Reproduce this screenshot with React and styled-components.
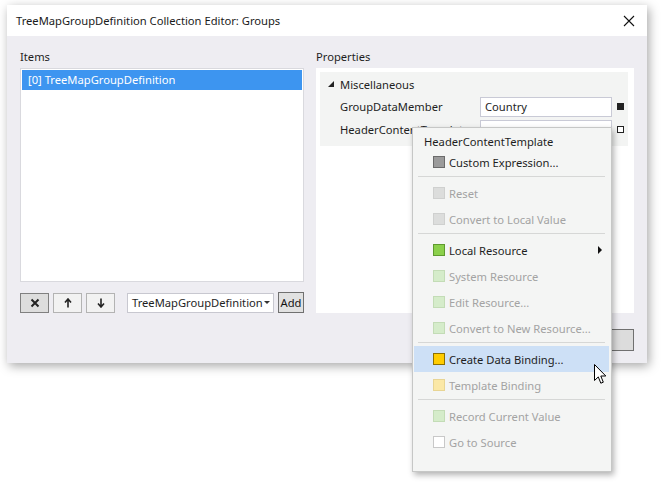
import React from "react";
import styled, { createGlobalStyle } from "styled-components";

const GlobalStyle = createGlobalStyle`
  html, body {
    margin: 0;
    padding: 0;
    background: #ffffff;
  }
  body {
    font-family: "Noto Sans", "Open Sans", sans-serif;
    font-size: 11.2px;
    color: #1e1e1e;
  }
`;

const menuItems = [
  { type: "header", label: "HeaderContentTemplate" },
  { label: "Custom Expression...", fill: "#9b9b9b", edge: "#6b6b6b" },
  { type: "sep" },
  { label: "Reset", fill: "#dcdddc", edge: "#cfd0cf", disabled: true },
  { label: "Convert to Local Value", fill: "#dcdddc", edge: "#cfd0cf", disabled: true },
  { type: "sep" },
  { label: "Local Resource", fill: "#8bd04b", edge: "#5f9a2f", submenu: true },
  { label: "System Resource", fill: "#d5ecca", edge: "#c3dcb6", disabled: true },
  { label: "Edit Resource...", fill: "#d5ecca", edge: "#c3dcb6", disabled: true },
  { label: "Convert to New Resource...", fill: "#d5ecca", edge: "#c3dcb6", disabled: true },
  { type: "sep" },
  { label: "Create Data Binding...", fill: "#ffcc00", edge: "#8d7000", active: true },
  { label: "Template Binding", fill: "#fbe8a6", edge: "#e8d594", disabled: true },
  { type: "sep" },
  { label: "Record Current Value", fill: "#d5ecca", edge: "#c3dcb6", disabled: true },
  { label: "Go to Source", fill: "#ffffff", edge: "#c8c8c8", disabled: true },
];

const App = () => {
  return (
    <Stage>
      <GlobalStyle />
      <Dialog>
        <TitleBar>
          <Title>TreeMapGroupDefinition Collection Editor: Groups</Title>
          <CloseButton>
            <svg width="12" height="12" viewBox="0 0 12 12">
              <path d="M1 1 L11 11 M11 1 L1 11" stroke="#111" strokeWidth="1.1" />
            </svg>
          </CloseButton>
        </TitleBar>
        <Body>
          <Columns>
            <ItemsColumn>
              <Label>Items</Label>
              <ItemsList>
                <ItemRow $selected>[0] TreeMapGroupDefinition</ItemRow>
              </ItemsList>
              <Toolbar>
                <ToolButton $pressed>
                  <svg width="10" height="10" viewBox="0 0 10 10">
                    <path d="M1.5 1.5 L8.5 8.5 M8.5 1.5 L1.5 8.5" stroke="#222" strokeWidth="2" />
                  </svg>
                </ToolButton>
                <ToolButton>
                  <svg width="8" height="10" viewBox="0 0 8 10">
                    <path d="M4 9.5 V2 M1 4.5 L4 1 L7 4.5" stroke="#222" strokeWidth="1.6" fill="none" />
                  </svg>
                </ToolButton>
                <ToolButton>
                  <svg width="8" height="10" viewBox="0 0 8 10">
                    <path d="M4 0.5 V8 M1 5.5 L4 9 L7 5.5" stroke="#222" strokeWidth="1.6" fill="none" />
                  </svg>
                </ToolButton>
                <Combo>
                  <span>TreeMapGroupDefinition</span>
                  <ComboArrow />
                </Combo>
                <AddButton>Add</AddButton>
              </Toolbar>
            </ItemsColumn>
            <PropertiesColumn>
              <Label>Properties</Label>
              <PropertiesPanel>
                <Grid>
                  <CategoryRow>
                    <Expander />
                    Miscellaneous
                  </CategoryRow>
                  <PropRow>
                    <PropName>GroupDataMember</PropName>
                    <PropValue>Country</PropValue>
                    <Marker $filled />
                  </PropRow>
                  <PropRow>
                    <PropName>HeaderContentTemplate</PropName>
                    <PropValue />
                    <Marker />
                  </PropRow>
                </Grid>
              </PropertiesPanel>
            </PropertiesColumn>
          </Columns>
          {/* OK / Cancel sit behind the context menu; only an edge shows */}
          <Footer>
            <DialogButton />
            <DialogButton />
          </Footer>
        </Body>
      </Dialog>

      <Menu>
        {menuItems.map((item, i) => {
          if (item.type === "sep") return <Separator key={i} />;
          if (item.type === "header") return <MenuHeader key={i}>{item.label}</MenuHeader>;
          return (
            <MenuItem key={i} $active={item.active} $disabled={item.disabled}>
              <Swatch $fill={item.fill} $edge={item.edge} />
              {item.label}
              {item.submenu && <SubArrow />}
            </MenuItem>
          );
        })}
      </Menu>

      <Cursor width="14" height="21" viewBox="0 0 14 21">
        <path
          d="M0.5 0.5 V16.5 L4.3 12.9 L6.8 19.2 L9.3 18.2 L6.8 12 H11.8 Z"
          fill="#fff"
          stroke="#000"
          strokeWidth="1"
          strokeLinejoin="miter"
        />
      </Cursor>
    </Stage>
  );
};

const Stage = styled.div`
  position: relative;
  width: 661px;
  height: 486px;
  padding: 5px 0 0 7px;
  box-sizing: border-box;
  overflow: hidden;
`;

const Dialog = styled.div`
  width: 640px;
  display: flex;
  flex-direction: column;
  background: #eeedf2;
  box-shadow: 2px 3px 10px rgba(0, 0, 0, 0.35);
`;

const TitleBar = styled.div`
  height: 31px;
  background: #ffffff;
  display: flex;
  align-items: center;
  justify-content: space-between;
  padding: 0 11px 0 9px;
`;

const Title = styled.div`
  color: #1a1a1a;
  padding-bottom: 1px;
`;

const CloseButton = styled.div`
  display: flex;
  align-items: center;
  justify-content: center;
  width: 14px;
  height: 14px;
`;

const Body = styled.div`
  padding: 12px 13px 12px 13px;
  display: flex;
  flex-direction: column;
`;

const Columns = styled.div`
  display: flex;
  gap: 12px;
`;

const ItemsColumn = styled.div`
  width: 284px;
  display: flex;
  flex-direction: column;
`;

const PropertiesColumn = styled.div`
  flex: 1;
  display: flex;
  flex-direction: column;
`;

const Label = styled.div`
  height: 20px;
  line-height: 18px;
  color: #1e1e1e;
`;

const ItemsList = styled.div`
  height: 214px;
  box-sizing: border-box;
  background: #ffffff;
  border: 1px solid #d9d9de;
  padding: 1px;
`;

const ItemRow = styled.div`
  height: 20px;
  line-height: 20px;
  padding-left: 6px;
  background: ${(p) => (p.$selected ? "#3d95f0" : "transparent")};
  color: ${(p) => (p.$selected ? "#ffffff" : "#1e1e1e")};
`;

const Toolbar = styled.div`
  margin-top: 10px;
  height: 21px;
  display: flex;
  align-items: center;
  gap: 4px;
`;

const ToolButton = styled.div`
  width: 29px;
  height: 20px;
  margin-top: 1px;
  box-sizing: border-box;
  display: flex;
  align-items: center;
  justify-content: center;
  background: ${(p) => (p.$pressed ? "#dddddd" : "#f2f2f2")};
  border: 1px solid ${(p) => (p.$pressed ? "#808080" : "#b3b3b3")};
`;

const Combo = styled.div`
  margin-left: 8px;
  width: 147px;
  height: 20px;
  box-sizing: border-box;
  background: #ffffff;
  border: 1px solid #c8c8d0;
  display: flex;
  align-items: center;
  justify-content: space-between;
  padding: 0 3px 0 4px;
  color: #1e1e1e;
  white-space: nowrap;
  overflow: hidden;
`;

const ComboArrow = styled.span`
  width: 0;
  height: 0;
  border-left: 3px solid transparent;
  border-right: 3px solid transparent;
  border-top: 3px solid #333;
  flex-shrink: 0;
`;

const AddButton = styled.div`
  width: 26px;
  height: 21px;
  box-sizing: border-box;
  background: #e1e1e1;
  border: 1px solid #707070;
  line-height: 19px;
  text-align: center;
  color: #111;
`;

const PropertiesPanel = styled.div`
  height: 245px;
  box-sizing: border-box;
  background: #ffffff;
  padding: 4px 6px 4px 4px;
`;

const Grid = styled.div`
  background: #f3f4f3;
  padding: 1px 0 5px 0;
`;

const CategoryRow = styled.div`
  height: 22px;
  display: flex;
  align-items: center;
  padding-left: 8px;
  gap: 6px;
  color: #1e1e1e;
`;

const Expander = styled.span`
  width: 0;
  height: 0;
  border-left: 6px solid transparent;
  border-bottom: 6px solid #222;
`;

const PropRow = styled.div`
  height: 23px;
  display: flex;
  align-items: center;
  padding-left: 20px;
`;

const PropName = styled.div`
  width: 140px;
  color: #1e1e1e;
  white-space: nowrap;
`;

const PropValue = styled.div`
  width: 132px;
  height: 20px;
  box-sizing: border-box;
  background: #ffffff;
  border: 1px solid #c9cad6;
  padding-left: 4px;
  line-height: 18px;
  color: #1e1e1e;
`;

const Marker = styled.span`
  margin-left: 5px;
  width: 7px;
  height: 7px;
  box-sizing: border-box;
  border: 1px solid #222;
  background: ${(p) => (p.$filled ? "#222" : "#ffffff")};
`;

const Footer = styled.div`
  display: flex;
  justify-content: flex-end;
  gap: 5px;
  padding: 16px 0 0 0;
`;

const DialogButton = styled.div`
  width: 75px;
  height: 22px;
  box-sizing: border-box;
  background: #dcdcdc;
  border: 1px solid #707070;
`;

const Menu = styled.div`
  position: absolute;
  left: 412px;
  top: 127px;
  width: 200px;
  box-sizing: border-box;
  background: #f4f5f4;
  border: 1px solid #c6c7c6;
  box-shadow: 2px 3px 6px rgba(0, 0, 0, 0.3);
  padding: 1px 2px 16px 1px;
  display: flex;
  flex-direction: column;
`;

const MenuHeader = styled.div`
  height: 20px;
  line-height: 25px;
  padding-left: 10px;
  color: #1e1e1e;
`;

const MenuItem = styled.div`
  position: relative;
  height: 26px;
  display: flex;
  align-items: center;
  gap: 4px;
  padding-left: 19px;
  background: ${(p) => (p.$active ? "#cde0f6" : "transparent")};
  color: ${(p) => (p.$disabled ? "#a3a3a3" : "#1e1e1e")};
`;

const Swatch = styled.span`
  width: 12px;
  height: 12px;
  box-sizing: border-box;
  background: ${(p) => p.$fill};
  border: 1px solid ${(p) => p.$edge};
`;

const SubArrow = styled.span`
  position: absolute;
  right: 7px;
  top: 9px;
  width: 0;
  height: 0;
  border-top: 4px solid transparent;
  border-bottom: 4px solid transparent;
  border-left: 4px solid #111;
`;

const Separator = styled.div`
  height: 1px;
  margin: 1px 4px 3px 4px;
  background: #d6d7d6;
`;

const Cursor = styled.svg`
  position: absolute;
  left: 594px;
  top: 364px;
`;

export default App;
